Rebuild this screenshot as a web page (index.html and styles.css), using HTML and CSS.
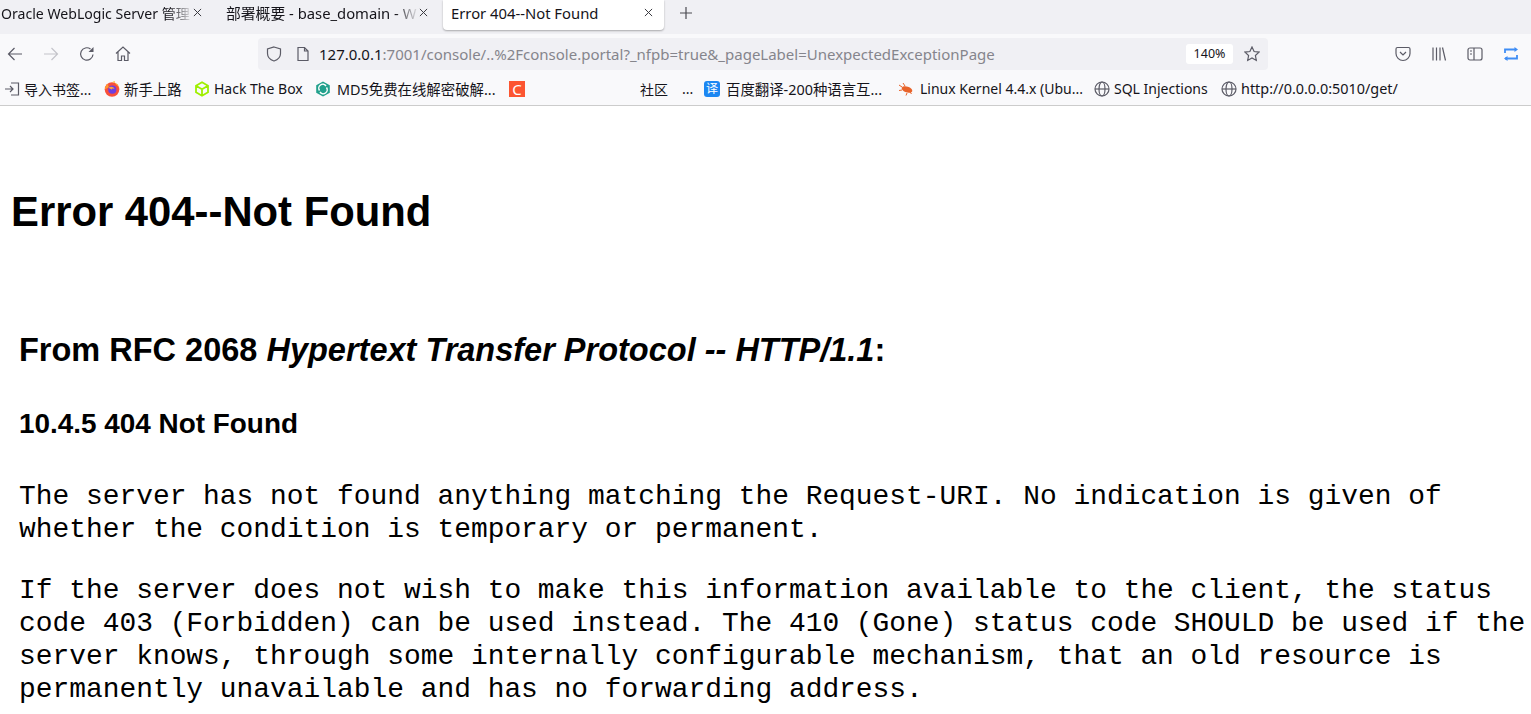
FILE: index.html
```html
<!DOCTYPE html>
<html lang="en">
<head>
  <meta charset="UTF-8">
  <title>Error 404--Not Found</title>
  <link rel="stylesheet" href="styles.css">
</head>
<body>

<header class="browser">
  <div class="tabbar">
    <div class="tab tab-first">
      <span class="tab-title">Oracle WebLogic Server 管理</span>
      <svg class="tab-close" viewBox="0 0 10 10"><path d="M1 1l8 8M9 1l-8 8"/></svg>
    </div>
    <div class="tab tab-second">
      <span class="tab-title">部署概要 - base_domain - W</span>
      <svg class="tab-close" viewBox="0 0 10 10"><path d="M1 1l8 8M9 1l-8 8"/></svg>
    </div>
    <div class="tab tab-active">
      <span class="tab-title">Error 404--Not Found</span>
      <svg class="tab-close" viewBox="0 0 10 10"><path d="M1 1l8 8M9 1l-8 8"/></svg>
    </div>
    <svg class="new-tab" viewBox="0 0 12 12"><path d="M6 0v12M0 6h12"/></svg>
  </div>

  <div class="toolbar">
    <div class="nav-buttons">
      <svg class="icon" viewBox="0 0 16 16"><path d="M15 8H1.500M7.500 2l-6 6 6 6"/></svg>
      <svg class="icon icon-off" viewBox="0 0 16 16"><path d="M1 8h13.500M8.500 2l6 6-6 6"/></svg>
      <svg class="icon" viewBox="0 0 16 16"><path d="M14 8.500A6.200 6.200 0 1 1 11.500 3"/><path class="solid" d="M14.500 1v5h-5z"/></svg>
      <svg class="icon" viewBox="0 0 16 16"><path d="M1 7.500L8 1l7 6.500M3 6v8.500h3.500V10h3v4.500H13V6"/></svg>
    </div>
    <div class="urlbar">
      <svg class="icon url-shield" viewBox="0 0 16 16"><path d="M8 1l6.500 2v4.500C14.500 11.500 11 14 8 15 5 14 1.500 11.500 1.500 7.500V3z"/></svg>
      <svg class="icon url-page" viewBox="0 0 16 16"><path d="M3 1.500h6.500L13 5v9.500H3zM9.500 1.500V5H13"/></svg>
      <span class="url"><span class="url-host">127.0.0.1</span>:7001/console/..%2Fconsole.portal?_nfpb=true&amp;_pageLabel=UnexpectedExceptionPage</span>
      <span class="zoom-badge">140%</span>
      <svg class="icon url-star" viewBox="0 0 16 16"><path d="M8 1l2.100 4.500 4.900.6-3.600 3.400.9 4.900L8 11.900l-4.300 2.500.9-4.900L1 6.100l4.900-.6z"/></svg>
    </div>
    <div class="tool-buttons">
      <svg class="icon" viewBox="0 0 16 16"><path d="M2.500 1.500h11A1.500 1.500 0 0 1 15 3v4.500a7 7 0 0 1-14 0V3a1.500 1.500 0 0 1 1.500-1.500zM5 6l3 3 3-3"/></svg>
      <svg class="icon" viewBox="0 0 16 16"><path d="M2 1.500v13M5.500 1.500v13M9 1.500v13M11.500 1.500l3 13"/></svg>
      <svg class="icon" viewBox="0 0 16 16"><rect x="1" y="2" width="14" height="12" rx="2"/><path d="M7 2v12M3 5h2M3 8h2"/></svg>
      <svg class="icon icon-sync" viewBox="0 0 16 16"><path d="M2 7V3.500h11M2 12.500h12V9"/><path class="solid" d="M11.500 1l3.500 2.500L11.500 6zM4.500 10L1 12.500 4.500 15z"/></svg>
    </div>
  </div>

  <div class="bookmarks">
    <span class="bookmark bm-import">
      <svg class="icon fav" viewBox="0 0 16 16"><path d="M7 2h7.500v12H7M1 8h8M6 5l3 3-3 3"/></svg>导入书签...
    </span>
    <span class="bookmark bm-firefox bm-wide">
      <svg class="fav" viewBox="0 0 16 16">
        <circle cx="8" cy="8.500" r="7.300" fill="#f9503a"/>
        <path d="M8 1.200C12 1 15.500 4 15.300 8.500 15 6 13.800 4.200 11.800 3.200L10.500 0z" fill="#ffbd2e"/>
        <path d="M.8 8.500C1 5.500 2.500 3.500 4.500 2.500 3.800 4 4 5 5 6z" fill="#ff9a2e"/>
        <circle cx="8.300" cy="8.700" r="4.100" fill="#6e3ee0"/>
        <path d="M4.500 6.800c2-1.700 5.300-1.300 6 1.300-1-1-2.500-1-3 .6-.5-.9-2-1-3-1.900z" fill="#ffa436"/>
      </svg>新手上路
    </span>
    <span class="bookmark bm-htb">
      <svg class="fav" viewBox="0 0 16 16"><path d="M8 1.300l6 3.400v6.600l-6 3.400-6-3.400V4.700zM2 4.700l6 3.500 6-3.500M8 8.200v6.500" fill="none" stroke="#9fef00" stroke-width="1.800"/></svg>Hack The Box
    </span>
    <span class="bookmark bm-md5 bm-wide">
      <svg class="fav" viewBox="0 0 16 16">
        <path d="M8 .5l6.800 3.800v7.400L8 15.500l-6.800-3.800V4.300z" fill="#21a08c"/>
        <path d="M4.500 9.500A3.800 3.800 0 0 1 11 5M11.500 6.500A3.800 3.800 0 0 1 5 11" fill="none" stroke="#fff" stroke-width="1.500"/>
      </svg>MD5免费在线解密破解...
    </span>
    <span class="bookmark bm-blank"><span class="csdn">C</span></span>
    <span class="bookmark bm-community">社区</span>
    <span class="bookmark bm-more">...</span>
    <span class="bookmark bm-baidu bm-wide"><span class="baidu">译</span>百度翻译-200种语言互...</span>
    <span class="bookmark bm-linux">
      <svg class="fav" viewBox="0 0 16 16">
        <ellipse cx="9" cy="8.500" rx="5.500" ry="3" fill="#e8632a" transform="rotate(18 9 8.500)"/>
        <path d="M4 6L1 4M4 9l-3 .5M7 5L5 2M9 12l-1 2.500M12 11l1.500 2" stroke="#e8632a" fill="none"/>
      </svg>Linux Kernel 4.4.x (Ubu...
    </span>
    <span class="bookmark bm-sql">
      <svg class="icon fav" viewBox="0 0 16 16"><circle cx="8" cy="8" r="7"/><ellipse cx="8" cy="8" rx="3" ry="7"/><path d="M1 8h14"/></svg>SQL Injections
    </span>
    <span class="bookmark bm-wide">
      <svg class="icon fav" viewBox="0 0 16 16"><circle cx="8" cy="8" r="7"/><ellipse cx="8" cy="8" rx="3" ry="7"/><path d="M1 8h14"/></svg>http://0.0.0.0:5010/get/
    </span>
  </div>
</header>

<main class="page">
  <h1>Error 404--Not Found</h1>
  <div class="rfc">
    <h2>From RFC 2068 <i>Hypertext Transfer Protocol -- HTTP/1.1</i>:</h2>
    <h3>10.4.5 404 Not Found</h3>
    <p class="first">The server has not found anything matching the Request-URI. No indication is given of<br>whether the condition is temporary or permanent.</p>
    <p>If the server does not wish to make this information available to the client, the status<br>code 403 (Forbidden) can be used instead. The 410 (Gone) status code SHOULD be used if the<br>server knows, through some internally configurable mechanism, that an old resource is<br>permanently unavailable and has no forwarding address.</p>
  </div>
</main>

</body>
</html>
```

FILE: styles.css
```css
html, body {
  height: 100%;
  margin: 0;
  overflow: hidden;
  background: #fff;
  color: #000;
}

/* browser chrome */
.browser {
  font-family: "Noto Sans", "Noto Sans CJK SC", sans-serif;
  color: #15141a;
  border-bottom: 1px solid #ccc;
}

.tabbar {
  display: flex;
  align-items: flex-start;
  height: 34px;
  background: #f0f0f4;
}

.tab {
  display: flex;
  align-items: center;
  height: 30px;
  padding-bottom: 5px;
  font-size: 14.800px;
  box-sizing: border-box;
}

.tab-first {
  width: 215px;
  padding-left: 1px;
  padding-right: 13px;
  font-size: 14.100px;
}

.tab-second {
  width: 228px;
  padding-left: 11px;
  padding-right: 15px;
}

.tab-active {
  width: 221px;
  padding-left: 8px;
  padding-right: 11px;
  background: #fff;
  border-radius: 0 0 4px 4px;
  box-shadow: 0 1px 2px rgba(0, 0, 0, 0.3);
}

.tab-title {
  flex: 1;
  min-width: 0;
  overflow: hidden;
  white-space: nowrap;
  -webkit-mask-image: linear-gradient(to left, transparent, #000 24px);
  mask-image: linear-gradient(to left, transparent, #000 24px);
}

.tab-active .tab-title {
  -webkit-mask-image: none;
  mask-image: none;
}

.tab-close {
  flex: none;
  width: 9px;
  height: 9px;
  fill: none;
  stroke: #3a3a40;
  stroke-width: 1.100;
}

.new-tab {
  flex: none;
  width: 12px;
  height: 12px;
  margin: 7px 0 0 16px;
  fill: none;
  stroke: #4a4a50;
  stroke-width: 1.200;
}

.icon {
  flex: none;
  width: 16px;
  height: 16px;
  fill: none;
  stroke: #5b5b66;
  stroke-width: 1.200;
}

.icon .solid {
  fill: #5b5b66;
  stroke: none;
}

.icon-off {
  stroke: #c4c4ca;
}

.icon-sync {
  stroke: #3f8df5;
  stroke-width: 1.800;
}

.icon-sync .solid {
  fill: #3f8df5;
}

.toolbar {
  display: flex;
  align-items: flex-start;
  height: 38px;
  padding-top: 4px;
  box-sizing: border-box;
  background: #f9f9fb;
}

.nav-buttons {
  display: flex;
  gap: 20px;
  width: 258px;
  padding: 8px 0 0 7px;
  box-sizing: border-box;
}

.urlbar {
  display: flex;
  align-items: center;
  width: 1010px;
  height: 32px;
  padding: 0 8px;
  box-sizing: border-box;
  background: #f0f0f4;
  border-radius: 4px;
}

.url-shield {
  margin-right: 13px;
}

.url-page {
  margin-right: 8px;
}

.url {
  flex: 1;
  font-size: 15px;
  color: #85858c;
  white-space: nowrap;
}

.url-host {
  color: #15141a;
}

.zoom-badge {
  width: 47px;
  height: 20px;
  margin-right: 11px;
  background: #fff;
  border-radius: 3px;
  font-size: 12.500px;
  line-height: 20px;
  text-align: center;
}

.tool-buttons {
  display: flex;
  gap: 20px;
  margin-left: 127px;
  padding-top: 8px;
}

.bookmarks {
  display: flex;
  align-items: center;
  height: 33px;
  padding-left: 4px;
  background: #f9f9fb;
  font-size: 14px;
  white-space: nowrap;
}

.bookmark {
  display: flex;
  align-items: center;
}

.bm-wide { font-size: 14.400px; }

.bm-import { width: 100px; }
.bm-firefox { width: 90px; }
.bm-htb { width: 121px; }
.bm-md5 { width: 194px; }
.bm-blank { width: 131px; }
.bm-community { width: 42px; }
.bm-more { width: 22px; }
.bm-baidu { width: 194px; }
.bm-linux { width: 196px; }
.bm-sql { width: 127px; }

.fav {
  flex: none;
  width: 16px;
  height: 16px;
  margin-right: 4px;
}

.bm-md5 .fav,
.bm-linux .fav {
  margin-right: 6px;
}

.csdn {
  width: 16px;
  height: 16px;
  background: #fc5531;
  color: #fff;
  font-size: 15px;
  line-height: 16px;
  text-align: center;
}

.baidu {
  flex: none;
  width: 16px;
  height: 16px;
  margin-right: 6px;
  background: #1c87f2;
  border-radius: 3px;
  color: #fff;
  font-size: 12px;
  line-height: 16px;
  text-align: center;
}

/* error page at 140% zoom */
.page {
  padding: 0 0 0 11px;
}

h1 {
  margin: 0;
  padding-top: 80px;
  font-family: "Liberation Sans", Arial, sans-serif;
  font-size: 41.800px;
  line-height: 52px;
  font-weight: bold;
}

.rfc {
  padding: 0 0 0 8px;
}

h2 {
  margin: 0;
  padding-top: 92px;
  font-family: "Liberation Sans", Arial, sans-serif;
  font-size: 32.500px;
  line-height: 40px;
}

h3 {
  margin: 0;
  padding-top: 37px;
  font-family: "Liberation Sans", Arial, sans-serif;
  font-size: 27.900px;
  line-height: 34px;
}

p {
  margin: 0;
  padding-top: 28px;
  font-family: "Liberation Mono", "Courier New", monospace;
  font-size: 27.900px;
  line-height: 33px;
  white-space: nowrap;
}

p.first {
  padding-top: 39px;
}
```
